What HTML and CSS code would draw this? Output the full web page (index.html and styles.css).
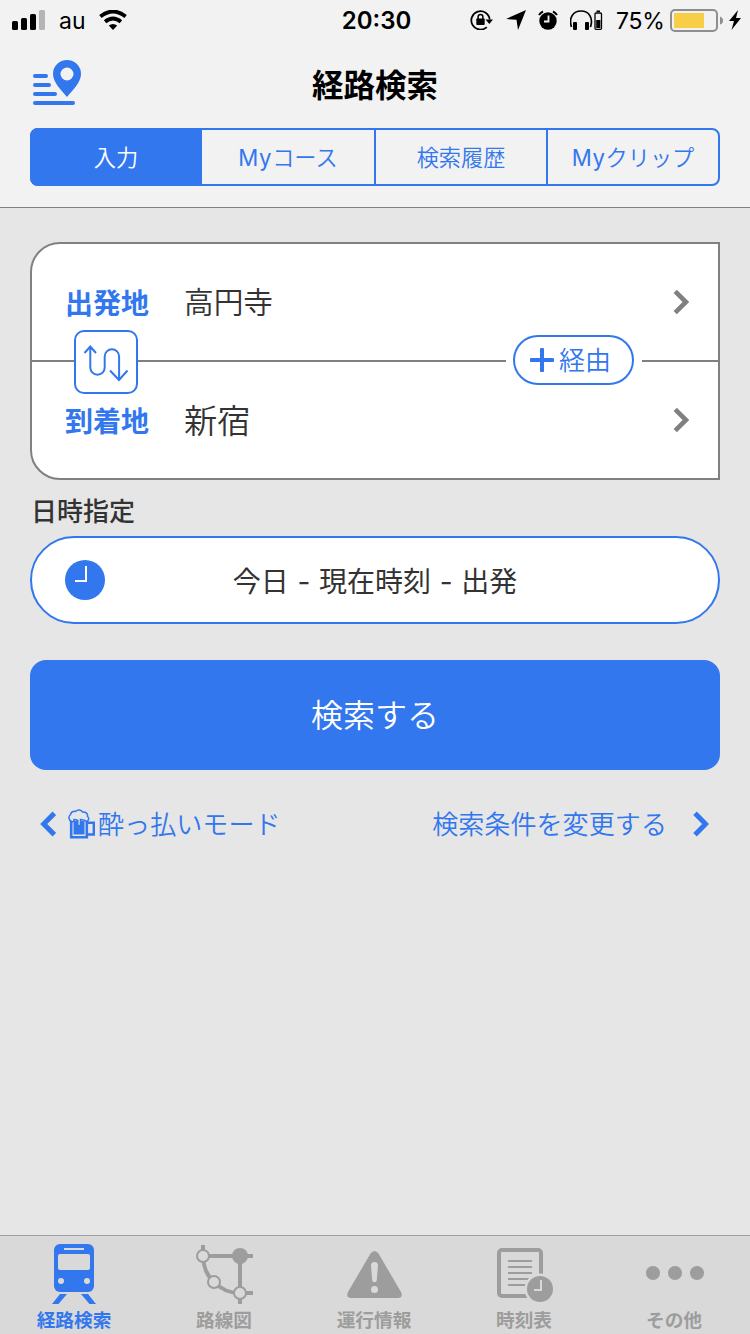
FILE: index.html
```html
<!DOCTYPE html>
<html lang="ja">
<head>
  <meta charset="UTF-8">
  <title>経路検索</title>
  <link rel="stylesheet" href="styles.css">
</head>
<body>
  <header class="header">
    <div class="status-bar">
      <div class="status-left">
        <svg class="signal" width="33" height="20" viewBox="0 0 33 20">
          <rect x="0" y="11" width="6" height="9" rx="1.5"/>
          <rect x="9" y="8" width="6" height="12" rx="1.5"/>
          <rect x="18" y="4" width="6" height="16" rx="1.5"/>
          <rect x="27" y="0" width="6" height="20" rx="1.5" fill="#b5b5b5"/>
        </svg>
        <span class="carrier">au</span>
        <svg class="wifi" width="28" height="20" viewBox="0 0 28 20">
          <path d="M1.4 6.6Q14 -3.6 26.6 6.6M6.1 11.7Q14 5.2 21.9 11.7" fill="none" stroke="#000" stroke-width="3.8"/>
          <path d="M9.8 15.6Q14 12.2 18.2 15.6L14 20Z"/>
        </svg>
      </div>
      <span class="time">20:30</span>
      <div class="status-right">
        <svg class="rotation-lock" width="23" height="20" viewBox="0 0 23 20">
          <path d="M16.8 17.1A9.2 9.2 0 1 1 19.7 9.5" fill="none" stroke="#000" stroke-width="1.8"/>
          <path d="M15.5 9.5H23L19.3 14Z"/>
          <rect x="6.3" y="8.500" width="8.4" height="6.5" rx="0.8"/>
          <path d="M8.100 9V6.8a2.4 2.4 0 0 1 4.8 0V9" fill="none" stroke="#000" stroke-width="1.5"/>
        </svg>
        <svg class="location" width="20" height="20" viewBox="0 0 20 20">
          <path d="M20 0L12 20L10.5 9.8L0 9Z"/>
        </svg>
        <svg class="alarm" width="20" height="20" viewBox="0 0 20 20">
          <circle cx="10" cy="11" r="8.7"/>
          <path d="M1 5A11 11 0 0 1 5 1.5M15 1.5A11 11 0 0 1 19 5" fill="none" stroke="#000" stroke-width="2"/>
          <path d="M10.5 5.5V11.5H6" fill="none" stroke="#f2f2f2" stroke-width="1.8"/>
        </svg>
        <svg class="headphones" width="33" height="20" viewBox="0 0 33 20">
          <path d="M1.5 17C-1.5 8 3 1 11 1S23.5 8 20.5 17" fill="none" stroke="#000" stroke-width="1.7"/>
          <rect x="3" y="12" width="4" height="8" rx="1"/>
          <rect x="15" y="12" width="4" height="8" rx="1"/>
          <rect x="25" y="3" width="6.5" height="16.3" rx="1" fill="none" stroke="#000" stroke-width="1.3"/>
          <rect x="26.5" y="0.5" width="3.5" height="1.5"/>
          <rect x="26.2" y="10" width="4.2" height="8"/>
        </svg>
        <span class="percent">75%</span>
        <svg class="battery" width="54" height="23" viewBox="0 0 54 23">
          <rect x="1" y="1" width="46" height="21" rx="4" fill="none" stroke="#8e8e8e" stroke-width="2"/>
          <rect x="4" y="4" width="30" height="15" fill="#f7ce46"/>
          <path d="M50 7.5Q53 8.5 53 11.5T50 15.5Z" fill="#8e8e8e"/>
        </svg>
        <svg class="bolt" width="12" height="20" viewBox="0 0 12 20">
          <path d="M9 0L0 11H5L2.5 20L12 8H7Z"/>
        </svg>
      </div>
    </div>
    <div class="title-row">
      <svg class="pin" width="48" height="46" viewBox="0 0 48 46">
        <path d="M2 16H13M2 25H16M2 34H22M2 43H40" stroke="#3277ee" stroke-width="4" stroke-linecap="round"/>
        <path fill="#3277ee" fill-rule="evenodd" d="M34 0A14 14 0 0 1 48 14C48 22 40 30 34 37C28 30 20 22 20 14A14 14 0 0 1 34 0ZM34 7.5A6.5 6.5 0 1 0 34 20.5A6.5 6.5 0 1 0 34 7.5Z"/>
      </svg>
      <h1>経路検索</h1>
    </div>
    <nav class="segments">
      <a class="segment active">入力</a>
      <a class="segment"><span class="latin">My</span>コース</a>
      <a class="segment">検索履歴</a>
      <a class="segment"><span class="latin">My</span>クリップ</a>
    </nav>
  </header>

  <main class="content">
    <section class="route">
      <div class="route-row">
        <span class="route-label">出発地</span>
        <span class="route-value">高円寺</span>
        <svg class="chevron" width="16" height="26" viewBox="0 0 16 26"><path d="M2.2 2.3L12.9 13L2.2 23.7"/></svg>
      </div>
      <div class="route-row">
        <span class="route-label">到着地</span>
        <span class="route-value large">新宿</span>
        <svg class="chevron" width="16" height="26" viewBox="0 0 16 26"><path d="M2.2 2.3L12.9 13L2.2 23.7"/></svg>
      </div>
      <button class="swap">
        <svg width="60" height="60" viewBox="0 0 60 60">
          <path d="M8.5 21L14.3 14.5L20 21M14.3 15V35.5a7.2 7.2 0 0 0 14.4 0V24.5a7.2 7.2 0 0 1 14.4 0V48M34 38.5L43 48L51.5 38.5" fill="none" stroke="#3277ee" stroke-width="2"/>
        </svg>
      </button>
      <div class="via-gap">
        <button class="via">
          <svg width="24" height="24" viewBox="0 0 24 24"><path d="M12 1.500V22.500M1.500 12H22.500" stroke="#3277ee" stroke-width="4" stroke-linecap="round"/></svg>
          <span>経由</span>
        </button>
      </div>
    </section>

    <h2>日時指定</h2>
    <div class="datetime">
      <svg class="clock" width="40" height="40" viewBox="0 0 40 40">
        <circle cx="20" cy="20" r="20" fill="#3277ee"/>
        <path d="M21 6V21H10" fill="none" stroke="#fff" stroke-width="2"/>
      </svg>
      <span class="datetime-text">今日 - 現在時刻 - 出発</span>
    </div>

    <button class="search">検索する</button>

    <div class="links">
      <a class="link">
        <svg class="chevron blue" width="16" height="26" viewBox="0 0 16 26"><path d="M14.3 2.3L3.7 13L14.3 23.7"/></svg>
        <svg class="beer" width="28" height="31" viewBox="0 0 28 31">
          <path d="M3.2 10V28.3H18.8V11" fill="none" stroke="#3277ee" stroke-width="2.6"/>
          <path d="M20 13.8H25.8V25.5H20" fill="none" stroke="#3277ee" stroke-width="2.4"/>
          <path d="M5.5 12H16.5V25.5H5.5Z" fill="#3277ee"/>
          <path d="M3.5 12.5C.5 11 0 7.5 2.5 5.5C3 3 5.5 1.7 7.5 2.5C9.5 .3 13.5 .8 14.5 3C18 2.5 20 5 19.5 7.5C21.5 9 21 11.5 18.5 12.5C16.5 10.5 14.5 11 12.5 10.5V15.5C12.5 17 9.8 17 9.8 15.5V11.5C8 10.5 7 10.5 6 10.5C6 12.5 5 13 3.5 12.5Z" fill="#e6e6e6" stroke="#3277ee" stroke-width="1.5"/>
        </svg>
        <span>酔っ払いモード</span>
      </a>
      <a class="link">
        <span>検索条件を変更する</span>
        <svg class="chevron blue next" width="16" height="26" viewBox="0 0 16 26"><path d="M2 2.3L12.6 13L2 23.7"/></svg>
      </a>
    </div>
  </main>

  <nav class="tab-bar">
    <a class="tab active">
      <svg width="70" height="66" viewBox="0 0 70 66">
        <rect x="15" y="4" width="40" height="48" rx="6"/>
        <rect class="hole" x="25" y="8" width="20" height="2"/>
        <rect class="hole" x="19" y="14" width="32" height="16" rx="2"/>
        <circle class="hole" cx="22" cy="41" r="3"/>
        <circle class="hole" cx="48" cy="41" r="3"/>
        <path d="M21 54H28L19.5 64H13ZM42 54H49L57 64H50.5Z"/>
      </svg>
      <span>経路検索</span>
    </a>
    <a class="tab">
      <svg width="70" height="66" viewBox="0 0 70 66">
        <path d="M14 5V16H64M51 16V64M51 53H64M14 16C14.5 28 18 36 25 42C32 49.5 40 53 51 53" fill="none" stroke="#9d9d9d" stroke-width="4"/>
        <circle cx="51" cy="16" r="8"/>
        <circle class="station" cx="14" cy="16" r="6"/>
        <circle class="station" cx="25" cy="42" r="6"/>
        <circle class="station" cx="51" cy="53" r="6"/>
      </svg>
      <span>路線図</span>
    </a>
    <a class="tab">
      <svg width="70" height="66" viewBox="0 0 70 66">
        <path d="M31.5 13.5Q35.5 8.5 39.5 13.5L62 52Q64.5 58 58.5 58H12.5Q6.5 58 9 52Z"/>
        <path class="hole" d="M32 25.5a3.5 3.5 0 0 1 7 0L37.8 40a2.3 2.3 0 0 1 -4.6 0Z"/>
        <circle class="hole" cx="35.5" cy="49.5" r="3.5"/>
      </svg>
      <span>運行情報</span>
    </a>
    <a class="tab">
      <svg width="70" height="66" viewBox="0 0 70 66">
        <rect x="10" y="10" width="42" height="46" rx="3" fill="none" stroke="#9d9d9d" stroke-width="4"/>
        <path d="M19 21H43M19 27H43M19 33H43M19 39H43M19 45H43" stroke="#9d9d9d" stroke-width="2"/>
        <circle class="hole" cx="51" cy="49" r="15.5"/>
        <circle cx="51" cy="49" r="13"/>
        <path d="M52 40V50H45" fill="none" stroke="#d9d9d9" stroke-width="2"/>
      </svg>
      <span>時刻表</span>
    </a>
    <a class="tab">
      <svg width="70" height="66" viewBox="0 0 70 66">
        <circle cx="14" cy="33" r="7"/>
        <circle cx="36" cy="33" r="7"/>
        <circle cx="58" cy="33" r="7"/>
      </svg>
      <span>その他</span>
    </a>
  </nav>
</body>
</html>
```
FILE: styles.css
```css
* { box-sizing: border-box; }
body { margin: 0; height: 1334px; display: flex; flex-direction: column; background: #e6e6e6; color: #333; font-family: "Noto Sans CJK JP", sans-serif; }
svg { display: block; flex: none; }
button { margin: 0; padding: 0; font-family: inherit; cursor: pointer; }

/* header */
.header { height: 208px; background: #f2f2f2; border-bottom: 1px solid #808080; }
.status-bar { display: grid; grid-template-columns: 1fr auto 1fr; height: 40px; color: #000; font-family: Inter, sans-serif; line-height: 38px; padding: 0 9px 0 12px; }
.status-left, .status-right { display: flex; align-items: center; }
.status-right { justify-content: flex-end; }
.carrier { padding-top: 2px; font-size: 23px; margin: 0 13px 0 14px; }
.time { padding-top: 2px; font-size: 24px; font-weight: 600; }
.location { margin-left: 13px; }
.alarm { margin-left: 12px; }
.headphones { margin-left: 12px; }
.percent { padding-top: 2px; font-size: 23px; width: 48px; margin-left: 13px; letter-spacing: -0.3px; }
.battery { margin-left: 6px; }
.bolt { margin-left: 5px; }
.title-row { display: grid; grid-template-columns: 48px 1fr 48px; height: 88px; padding: 20px 33px 0; }
h1 { margin: 0; text-align: center; font-size: 31.5px; font-weight: 700; line-height: 46px; color: #000; }
.segments { display: grid; grid-template-columns: 170px 174px 172px 170px; width: 690px; height: 58px; margin: 0 30px; border: 2px solid #3277ee; border-radius: 8px; }
.segment { font-family: Inter, "Noto Sans CJK JP", sans-serif; font-size: 22.2px; font-weight: 350; line-height: 56px; height: 54px; text-align: center; color: #3277ee; border-right: 2px solid #3277ee; }
.segment:last-child { border-right: 0; }
.segment.active { height: 58px; margin: -2px 0 -2px -2px; line-height: 60px; background: #3277ee; color: #fff; border-right: 0; border-radius: 8px 0 0 8px; }
.latin { font-weight: 400; letter-spacing: 0.6px; }

/* route */
.content { flex: 1; padding: 34px 30px 0; }
.route { position: relative; height: 238px; background: #fff; border: 2px solid #808080; border-radius: 30px 0 0 30px; overflow: hidden; }
.route-row { display: flex; align-items: center; height: 118px; padding: 0 29px 0 33px; border-bottom: 2px solid #808080; }
.route-row + .route-row { height: 116px; border-bottom: 0; }
.route-label { width: 119px; font-size: 28px; font-weight: 700; color: #3277ee; }
.route-value { flex: 1; padding-bottom: 4px; font-size: 29.7px; font-weight: 350; }
.route-value.large { padding-bottom: 3px; font-size: 33.3px; }
.chevron { fill: none; stroke: #808080; stroke-width: 4.6; }
.chevron.blue { stroke: #3277ee; stroke-width: 5; }
.swap { position: absolute; left: 42px; top: 86px; width: 64px; height: 64px; background: #fff; border: 2px solid #3277ee; border-radius: 10px; }
.via-gap { position: absolute; left: 474px; top: 91px; width: 136px; padding: 0 8px 0 7px; background: #fff; }
.via { display: flex; align-items: center; gap: 5px; width: 121px; height: 50px; padding-left: 15px; background: #fff; border: 2px solid #3277ee; border-radius: 25px; color: #3277ee; font-size: 26px; font-weight: 350; line-height: 46px; }
.via span { padding-bottom: 2px; }

/* date and time */
h2 { margin: 11px 0 7px; padding-left: 1px; font-size: 26px; font-weight: 500; line-height: 38px; }
.datetime { display: grid; grid-template-columns: 40px 1fr 40px; align-items: center; height: 88px; padding: 0 33px; background: #fff; border: 2px solid #3277ee; border-radius: 44px; }
.datetime-text { padding-top: 3px; text-align: center; font-family: Inter, "Noto Sans CJK JP", sans-serif; font-size: 28px; font-weight: 400; word-spacing: 0.8px; line-height: 40px; }
.search { display: block; width: 690px; height: 110px; margin-top: 36px; padding-bottom: 4px; background: #3277ee; border: 0; border-radius: 16px; color: #fff; font-size: 32px; font-weight: 350; }
.links { display: flex; justify-content: space-between; margin-top: 34px; padding: 0 11px 0 10px; }
.link { display: flex; align-items: center; height: 40px; color: #3277ee; font-size: 26.1px; font-weight: 350; }
.link span { padding-bottom: 3px; }
.beer { margin: 0 2px 0 12px; }
.next { margin-left: 26px; }

/* tab bar */
.tab-bar { display: grid; grid-template-columns: 149px repeat(4, 150px); height: 99px; padding-top: 4px; background: #d9d9d9; border-top: 1px solid #a0a0a0; }
.tab { display: flex; flex-direction: column; align-items: center; color: #9d9d9d; fill: #9d9d9d; font-size: 18.7px; font-weight: 700; line-height: 26px; }
.tab.active { padding-right: 1px; color: #3277ee; fill: #3277ee; }
.hole { fill: #d9d9d9; }
.station { fill: #d9d9d9; stroke: #9d9d9d; stroke-width: 2; }
```
